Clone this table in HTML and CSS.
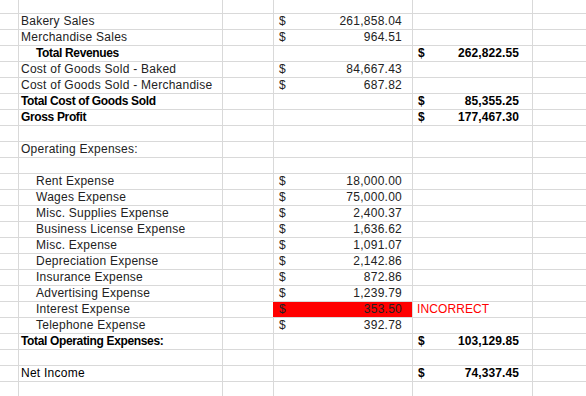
FILE: index.html
```html
<!DOCTYPE html>
<html>
<head>
<meta charset="utf-8">
<link rel="stylesheet" href="styles.css">
</head>
<body>
<div class="sheet">
  <div class="row top"><div></div><div></div><div></div><div></div><div></div><div></div></div>
  <div class="row"><div></div><div class="label">Bakery Sales</div><div></div><div class="amt"><span>$</span><span>261,858.04</span></div><div></div><div></div></div>
  <div class="row"><div></div><div class="label">Merchandise Sales</div><div></div><div class="amt"><span>$</span><span>964.51</span></div><div></div><div></div></div>
  <div class="row"><div></div><div class="label indent bold">Total Revenues</div><div></div><div></div><div class="amt total"><span>$</span><span>262,822.55</span></div><div></div></div>
  <div class="row"><div></div><div class="label">Cost of Goods Sold - Baked</div><div></div><div class="amt"><span>$</span><span>84,667.43</span></div><div></div><div></div></div>
  <div class="row"><div></div><div class="label">Cost of Goods Sold - Merchandise</div><div></div><div class="amt"><span>$</span><span>687.82</span></div><div></div><div></div></div>
  <div class="row"><div></div><div class="label bold">Total Cost of Goods Sold</div><div></div><div></div><div class="amt total"><span>$</span><span>85,355.25</span></div><div></div></div>
  <div class="row"><div></div><div class="label bold">Gross Profit</div><div></div><div></div><div class="amt total"><span>$</span><span>177,467.30</span></div><div></div></div>
  <div class="row"><div></div><div></div><div></div><div></div><div></div><div></div></div>
  <div class="row"><div></div><div class="label">Operating Expenses:</div><div></div><div></div><div></div><div></div></div>
  <div class="row"><div></div><div></div><div></div><div></div><div></div><div></div></div>
  <div class="row"><div></div><div class="label indent">Rent Expense</div><div></div><div class="amt"><span>$</span><span>18,000.00</span></div><div></div><div></div></div>
  <div class="row"><div></div><div class="label indent">Wages Expense</div><div></div><div class="amt"><span>$</span><span>75,000.00</span></div><div></div><div></div></div>
  <div class="row"><div></div><div class="label indent">Misc. Supplies Expense</div><div></div><div class="amt"><span>$</span><span>2,400.37</span></div><div></div><div></div></div>
  <div class="row"><div></div><div class="label indent">Business License Expense</div><div></div><div class="amt"><span>$</span><span>1,636.62</span></div><div></div><div></div></div>
  <div class="row"><div></div><div class="label indent">Misc. Expense</div><div></div><div class="amt"><span>$</span><span>1,091.07</span></div><div></div><div></div></div>
  <div class="row"><div></div><div class="label indent">Depreciation Expense</div><div></div><div class="amt"><span>$</span><span>2,142.86</span></div><div></div><div></div></div>
  <div class="row"><div></div><div class="label indent">Insurance Expense</div><div></div><div class="amt"><span>$</span><span>872.86</span></div><div></div><div></div></div>
  <div class="row"><div></div><div class="label indent">Advertising Expense</div><div></div><div class="amt"><span>$</span><span>1,239.79</span></div><div></div><div></div></div>
  <div class="row"><div></div><div class="label indent">Interest Expense</div><div></div><div class="amt error"><span>$</span><span>353.50</span></div><div class="flag">INCORRECT</div><div></div></div>
  <div class="row"><div></div><div class="label indent">Telephone Expense</div><div></div><div class="amt"><span>$</span><span>392.78</span></div><div></div><div></div></div>
  <div class="row"><div></div><div class="label bold">Total Operating Expenses:</div><div></div><div></div><div class="amt total"><span>$</span><span>103,129.85</span></div><div></div></div>
  <div class="row"><div></div><div></div><div></div><div></div><div></div><div></div></div>
  <div class="row"><div></div><div class="label net">Net Income</div><div></div><div></div><div class="amt total"><span>$</span><span>74,337.45</span></div><div></div></div>
  <div class="row"><div></div><div></div><div></div><div></div><div></div><div></div></div>
</div>
</body>
</html>
```

FILE: styles.css
```css
html, body {
  margin: 0;
  padding: 0;
  background: #ffffff;
}
body {
  width: 586px;
  height: 396px;
  overflow: hidden;
  font-family: "Liberation Sans", Arial, sans-serif;
  font-size: 12px;
  color: #222222;
}
.sheet {
  display: flex;
  flex-direction: column;
  gap: 1px;
  background: #d9d9d9;
  width: 586px;
}
.row {
  display: grid;
  grid-template-columns: 18px 203px 50px 138px 119px 1fr;
  gap: 1px;
  height: 15px;
  line-height: 15px;
}
.row.top {
  height: 13px;
}
.row > div {
  background: #ffffff;
  white-space: nowrap;
  overflow: visible;
}
.label {
  padding-left: 2px;
  letter-spacing: 0.25px;
}
.label.indent {
  padding-left: 17px;
}
.label.bold {
  font-weight: bold;
  letter-spacing: -0.35px;
  color: #000000;
}
.net {
  color: #000000;
}
.amt {
  display: flex;
  justify-content: space-between;
  padding: 0 10px 0 5px;
  letter-spacing: 0.25px;
}
.amt.total {
  font-weight: bold;
  color: #000000;
  letter-spacing: 0.1px;
  padding: 0 13px 0 5px;
}
.row > .amt.error {
  background: #ff0000;
  box-shadow: -1px 0 0 #ff0000;
}
.flag {
  color: #ff0000;
  padding-left: 4px;
  letter-spacing: 0.1px;
}
```
